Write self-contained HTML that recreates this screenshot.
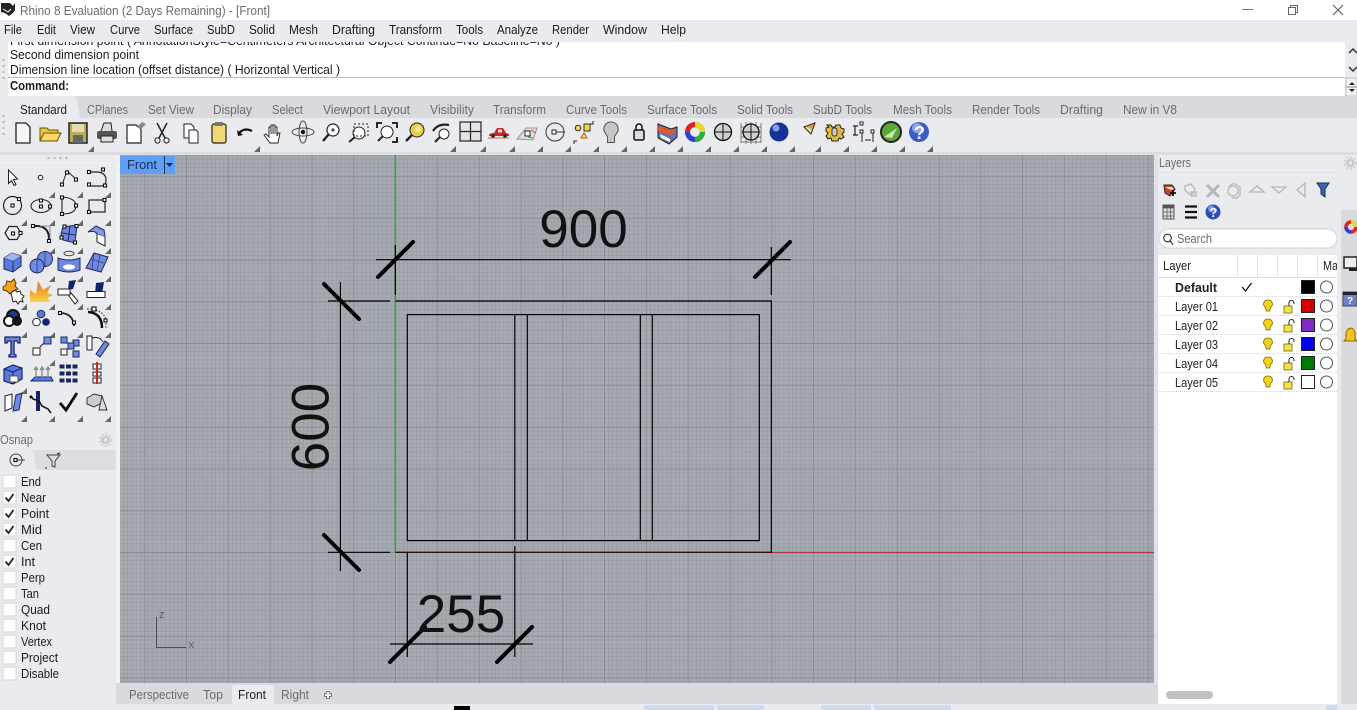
<!DOCTYPE html>
<html><head><meta charset="utf-8"><style>
html,body{margin:0;padding:0;background:#e9ebee;overflow:hidden}
svg{display:block}
text{font-family:"Liberation Sans",sans-serif;font-size:12.5px;fill:#1c1c1c}
.g{fill:#6b6b6b}.m{fill:#222}
.t{stroke:#000;stroke-width:4;stroke-linecap:round}
.l{stroke:#000;stroke-width:1.2;fill:none}
.o{stroke:#222;stroke-width:1.3;fill:none}
.h{fill:#fff;stroke:#111;stroke-width:1.1}
.b{fill:#6f86e0;stroke:#1c2a5c;stroke-width:1}
</style></head><body>
<svg xmlns="http://www.w3.org/2000/svg" width="1357" height="710" viewBox="0 0 1357 710">
<defs>
<linearGradient id="burst" x1="0" y1="0" x2="0" y2="1"><stop offset="0" stop-color="#e8700c"/><stop offset="1" stop-color="#fbd04c"/></linearGradient>
<pattern id="minor" x="395" y="552" width="4.18" height="4.18" patternUnits="userSpaceOnUse"><rect width="4.18" height="4.18" fill="#a5a9b0"/><path d="M0 0V4.18M0 0H4.18" stroke="#94989f" stroke-width="1"/></pattern>
<pattern id="major" x="395.5" y="552.5" width="41.8" height="41.8" patternUnits="userSpaceOnUse"><path d="M0 0V41.8M0 0H41.8" stroke="#7e8289" stroke-width="1" fill="none"/></pattern>
<path id="c" d="M0 0l-6 6h6z" fill="#666"/>
<g id="chk"><rect x="3" y="0" width="13" height="13" fill="#fff" stroke="#d5d6d9"/></g>
<path id="tick" d="M5.500 6.500l3 3.500 5-7" fill="none" stroke="#222" stroke-width="1.800"/>
<g id="bulb"><path d="M0-6a4 4 0 0 1 3 7l-1 2v2h-4v-2l-1-2a4 4 0 0 1 3-7z" fill="#f2d21c" stroke="#7a6a00" stroke-width=".8"/></g>
<g id="lk"><rect x="-5" y="-1" width="8" height="7" fill="#f5e050" stroke="#7a6a00" stroke-width=".8"/><path d="M0-1v-3a2.500 2.500 0 0 1 5 0v1" fill="none" stroke="#222" stroke-width="1"/></g>
</defs>

<!-- base -->
<rect width="1357" height="710" fill="#e9ebee"/>
<rect width="1357" height="20" fill="#fff"/>

<!-- title -->
<path d="M1 3h9l3 3 2-3v7l-2 3-4 3-4-3-4-1z" fill="#222"/><path d="M3 9l5 3 3-3" fill="none" stroke="#fff"/>
<text x="20" y="15" class="g" textLength="250" lengthAdjust="spacingAndGlyphs">Rhino 8 Evaluation (2 Days Remaining) - [Front]</text>
<path d="M1242 9.500h11" stroke="#777"/>
<path d="M1288.500 7.500h7v7h-7zM1290.500 7.500v-2h7v7h-2" fill="none" stroke="#666"/>
<path d="M1333 5l10 10M1343 5l-10 10" stroke="#555"/>

<!-- menu -->
<g class="m">
<text x="4" y="34" textLength="18" lengthAdjust="spacingAndGlyphs">File</text>
<text x="37" y="34" textLength="19" lengthAdjust="spacingAndGlyphs">Edit</text>
<text x="70" y="34" textLength="25" lengthAdjust="spacingAndGlyphs">View</text>
<text x="110" y="34" textLength="30" lengthAdjust="spacingAndGlyphs">Curve</text>
<text x="154" y="34" textLength="39" lengthAdjust="spacingAndGlyphs">Surface</text>
<text x="207" y="34" textLength="28" lengthAdjust="spacingAndGlyphs">SubD</text>
<text x="249" y="34" textLength="26" lengthAdjust="spacingAndGlyphs">Solid</text>
<text x="289" y="34" textLength="29" lengthAdjust="spacingAndGlyphs">Mesh</text>
<text x="332" y="34" textLength="43" lengthAdjust="spacingAndGlyphs">Drafting</text>
<text x="389" y="34" textLength="53" lengthAdjust="spacingAndGlyphs">Transform</text>
<text x="456" y="34" textLength="27" lengthAdjust="spacingAndGlyphs">Tools</text>
<text x="497" y="34" textLength="41" lengthAdjust="spacingAndGlyphs">Analyze</text>
<text x="552" y="34" textLength="37" lengthAdjust="spacingAndGlyphs">Render</text>
<text x="603" y="34" textLength="44" lengthAdjust="spacingAndGlyphs">Window</text>
<text x="661" y="34" textLength="25" lengthAdjust="spacingAndGlyphs">Help</text>
</g>

<!-- command area -->
<rect x="8" y="42" width="1337" height="54" fill="#fff"/>
<svg x="0" y="42" width="1345" height="6"><text x="10" y="3" textLength="550" lengthAdjust="spacingAndGlyphs">First dimension point ( AnnotationStyle=Centimeters Architectural  Object  Continue=No  Baseline=No )</text></svg>
<text x="10" y="59" textLength="129" lengthAdjust="spacingAndGlyphs">Second dimension point</text>
<text x="10" y="74" textLength="330" lengthAdjust="spacingAndGlyphs">Dimension line location (offset distance) ( Horizontal  Vertical )</text>
<path d="M8 77.500H1345" stroke="#b8bac0"/>
<text x="10" y="90" textLength="59" lengthAdjust="spacingAndGlyphs" style="font-weight:700">Command:</text>
<g fill="#b5b7bc"><circle cx="3.500" cy="60" r="1.200"/><circle cx="3.500" cy="66" r="1.200"/><circle cx="3.500" cy="72" r="1.200"/><circle cx="3.500" cy="78" r="1.200"/></g>
<path d="M1349 53l4-4 4 4M1349 67l4 4 4-4" fill="none" stroke="#444" stroke-width="1.600"/>
<path d="M1346 78h11v18h-11z" fill="#f4f4f5" stroke="#bbb"/><path d="M1346.500 87h10" stroke="#888"/><path d="M1349 85l3-3 3 3zM1349 89l3 3 3-3z" fill="#222"/>

<!-- toolbar tabs -->
<rect y="96" width="1357" height="22" fill="#d9dadd"/>
<path d="M0 118V98q0-2 2-2H72q4 0 5 4l3 18z" fill="#e9ebee"/>
<text x="20" y="114" class="m" textLength="47" lengthAdjust="spacingAndGlyphs">Standard</text>
<g class="g">
<text class="g" x="87" y="114" textLength="41" lengthAdjust="spacingAndGlyphs">CPlanes</text>
<text class="g" x="148" y="114" textLength="46" lengthAdjust="spacingAndGlyphs">Set View</text>
<text class="g" x="213" y="114" textLength="39" lengthAdjust="spacingAndGlyphs">Display</text>
<text class="g" x="272" y="114" textLength="31" lengthAdjust="spacingAndGlyphs">Select</text>
<text class="g" x="323" y="114" textLength="87" lengthAdjust="spacingAndGlyphs">Viewport Layout</text>
<text class="g" x="430" y="114" textLength="44" lengthAdjust="spacingAndGlyphs">Visibility</text>
<text class="g" x="493" y="114" textLength="53" lengthAdjust="spacingAndGlyphs">Transform</text>
<text class="g" x="566" y="114" textLength="61" lengthAdjust="spacingAndGlyphs">Curve Tools</text>
<text class="g" x="647" y="114" textLength="70" lengthAdjust="spacingAndGlyphs">Surface Tools</text>
<text class="g" x="737" y="114" textLength="56" lengthAdjust="spacingAndGlyphs">Solid Tools</text>
<text class="g" x="813" y="114" textLength="59" lengthAdjust="spacingAndGlyphs">SubD Tools</text>
<text class="g" x="893" y="114" textLength="59" lengthAdjust="spacingAndGlyphs">Mesh Tools</text>
<text class="g" x="972" y="114" textLength="68" lengthAdjust="spacingAndGlyphs">Render Tools</text>
<text class="g" x="1060" y="114" textLength="43" lengthAdjust="spacingAndGlyphs">Drafting</text>
<text class="g" x="1123" y="114" textLength="54" lengthAdjust="spacingAndGlyphs">New in V8</text>
</g>
<rect y="152" width="1357" height="3" fill="#dcdde0"/>
<g fill="#b5b7bc"><circle cx="3.500" cy="116" r="1.200"/><circle cx="3.500" cy="122" r="1.200"/><circle cx="3.500" cy="128" r="1.200"/><circle cx="3.500" cy="134" r="1.200"/></g>

<!-- toolbar icons -->
<g>
<path d="M16 123h10l4 4v16H16z" fill="#f6f6f6" stroke="#222" stroke-width="1.300"/>
<path d="M40 141v-13h7l2 2h9v3" fill="#e9c24a" stroke="#6a5200"/><path d="M40 141l4-8h17l-4 8z" fill="#f7d868" stroke="#6a5200"/>
<path d="M69 123h18v20H69z" fill="#b9ab5a" stroke="#222" stroke-width="1.500"/><rect x="72" y="124" width="12" height="8" fill="#e3dcae"/><rect x="73" y="135" width="10" height="8" fill="#666"/>
<use href="#c" x="94" y="146"/>
<path d="M101 131l3-8h7l1 8" fill="#ddd" stroke="#222"/><rect x="97" y="131" width="20" height="8" rx="2" fill="#555"/><rect x="101" y="136" width="12" height="6" fill="#ddd" stroke="#222"/>
<path d="M127 125h9l5 4v14h-14z" fill="#fff" stroke="#222" stroke-width="1.200"/><path d="M137 127l5-5 4 2-5 5z" fill="#888"/>
<path d="M157 123l8 15M167 123l-8 15" stroke="#222" stroke-width="1.500"/><circle cx="157.500" cy="140.500" r="2.600" fill="none" stroke="#222"/><circle cx="166.500" cy="140.500" r="2.600" fill="none" stroke="#222"/>
<path d="M184 124h7l3 3v11h-10z" fill="#fff" stroke="#222"/><path d="M189 130h7l2 2v11h-9z" fill="#fff" stroke="#222"/>
<rect x="212" y="124" width="14" height="19" rx="2" fill="#f2d873" stroke="#222" stroke-width="1.200"/><rect x="215" y="122" width="8" height="4" fill="#777"/>
<path d="M238 134q6-7 14-3" fill="none" stroke="#111" stroke-width="2.200"/><path d="M237 130l1 6 5-1z" fill="#111"/><use href="#c" x="260" y="146"/>
<path d="M270 143l-6-8 2-1 3 3v-10h2v7-9h2v9-9h2v9-7h2v9l1-3h2l-2 10z" fill="#fff" stroke="#222" stroke-width=".9"/>
<ellipse cx="303" cy="132" rx="11" ry="4" fill="none" stroke="#444"/><ellipse cx="303" cy="132" rx="4" ry="11" fill="none" stroke="#444"/><circle cx="303" cy="132" r="2.200" fill="#111"/>
<circle cx="333" cy="130" r="6" fill="#fff" stroke="#222" stroke-width="1.200"/><path d="M329 134l-6 7" stroke="#222" stroke-width="2.400"/><path d="M331 130h4M333 128v4" stroke="#222"/>
<circle cx="359" cy="133" r="6" fill="#fff" stroke="#222"/><path d="M355 137l-6 5" stroke="#222" stroke-width="2"/><rect x="354" y="124" width="14" height="12" fill="none" stroke="#222" stroke-dasharray="2 2"/>
<circle cx="387" cy="132" r="6" fill="#fff" stroke="#222"/><path d="M383 136l-5 5" stroke="#222" stroke-width="2"/><path d="M377 128v-5h5M392 123h5v5M397 137v5h-5" fill="none" stroke="#111" stroke-width="1.800"/>
<circle cx="417" cy="130" r="7" fill="#e6cf4e" stroke="#222"/><circle cx="418" cy="129" r="3" fill="#f7e88c"/><path d="M412 135l-6 6" stroke="#222" stroke-width="2.400"/>
<circle cx="444" cy="134" r="5" fill="#fff" stroke="#222"/><path d="M440 137l-5 5" stroke="#222" stroke-width="2"/><path d="M433 131q5-8 16-6" fill="none" stroke="#222" stroke-width="2.200"/><use href="#c" x="456" y="146"/>
<rect x="460" y="122" width="21" height="19" fill="#e4e4e4" stroke="#222" stroke-width="1.200"/><path d="M470.500 122v19M460 131.500h21" stroke="#222" stroke-width="1.200"/><use href="#c" x="486" y="146"/>
<path d="M489 135q1-2 5-2l3-5h6l3 5 3 1v2h-20z" fill="#c9282a"/><rect x="498" y="129.500" width="4" height="3" fill="#f3dede"/><circle cx="493" cy="136" r="1.800" fill="#222"/><circle cx="505" cy="136" r="1.800" fill="#222"/><path d="M488 138h21" stroke="#c66"/><use href="#c" x="515" y="146"/>
<path d="M517 139l9-11h11l-4 12z" fill="#ddd" stroke="#999"/><rect x="525" y="131" width="5" height="5" fill="#fff" stroke="#222"/><path d="M531 130l5 3" stroke="#d33"/><path d="M528 137l5 1" stroke="#3a3"/><use href="#c" x="543" y="146"/>
<circle cx="555" cy="132" r="9" fill="none" stroke="#333"/><path d="M553 132h12" stroke="#333"/><rect x="552" y="130" width="4" height="4" fill="#fff" stroke="#222"/><use href="#c" x="571" y="146"/>
<circle cx="578" cy="128" r="2.800" fill="#f0d83c" stroke="#333"/><rect x="584" y="124" width="6" height="7" fill="#f0d83c" stroke="#333"/><path d="M581 138l3-5 3 5z" fill="#f4e58c" stroke="#b35c00"/><path d="M574 144v-3h3M590 124h3v-3" fill="none" stroke="#222"/><use href="#c" x="599" y="146"/>
<path d="M611 122a7 7 0 0 1 5.500 11.500l-2 3v6h-7v-6l-2-3a7 7 0 0 1 5.500-11.500z" fill="#c6c6c6" stroke="#555"/><use href="#c" x="627" y="146"/>
<rect x="634" y="130" width="10" height="10" rx="1.500" fill="#ddd" stroke="#111" stroke-width="1.500"/><path d="M636 130v-3a3 3 0 0 1 6 0v3" fill="none" stroke="#111" stroke-width="1.500"/><use href="#c" x="655" y="146"/>
<path d="M658 124l13 5 6-2v10l-8 7-11-6z" fill="#6372b6" stroke="#222"/><path d="M658 126l13 4 5-2-1 4-5 3-12-4z" fill="#e2572c"/><path d="M660 134l10 5v3l-9-4z" fill="#fff"/><use href="#c" x="683" y="146"/>
<circle cx="695" cy="132" r="7.500" fill="none" stroke="#d22" stroke-width="5"/><path d="M695 124.500a7.500 7.500 0 0 1 7.500 7.500" fill="none" stroke="#e8d820" stroke-width="5"/><path d="M702.500 132a7.500 7.500 0 0 1-7.500 7.500" fill="none" stroke="#22b33a" stroke-width="5"/><path d="M695 139.500a7.500 7.500 0 0 1-7.500-7.500" fill="none" stroke="#2a40d8" stroke-width="5"/><use href="#c" x="711" y="146"/>
<circle cx="723" cy="132" r="8.500" fill="#cfcfcf" stroke="#111" stroke-width="1.300"/><path d="M715 132h16M723 124v16" stroke="#111"/><use href="#c" x="739" y="146"/>
<path d="M741 123v20M746 122v22M751 122v22M756 122v22M761 123v20M741 127h20M741 132h20M741 137h20M741 142h20" stroke="#555" stroke-width=".7"/><circle cx="751" cy="132" r="8" fill="#cfcfcf" stroke="#111" stroke-width="1.300"/><path d="M743 132h16M751 124v16" stroke="#111"/><use href="#c" x="767" y="146"/>
<circle cx="779" cy="132" r="9.500" fill="#14339a"/><circle cx="776" cy="128" r="3.500" fill="#7fa0ee"/><use href="#c" x="795" y="146"/>
<path d="M804 127l11-4-4 11z" fill="#e9d7a0" stroke="#222"/><path d="M807 127l7-3-2 5z" fill="#ef9b20"/><use href="#c" x="821" y="146"/>
<path d="M827 125h4l1 2h3l1-2h4l1 3 3 1v3l-2 2 2 3-3 2-2-1-1 3h-6l-1-3-3 1-2-3 2-3-2-2v-3l3-1z" fill="#e5ba3c" stroke="#222"/><rect x="832" y="128" width="5" height="8" rx="2" fill="#ccc" stroke="#333"/><use href="#c" x="849" y="146"/>
<path d="M853 126h5M855 126v9M853 135h5" stroke="#222" stroke-width="1.200" fill="none"/><rect x="860" y="122" width="3" height="3" fill="#fff" stroke="#222"/><rect x="860" y="130" width="3" height="3" fill="#fff" stroke="#222"/><path d="M862 133v9M865 140h6M873 133v9" stroke="#222"/><rect x="871" y="130" width="3" height="3" fill="#fff" stroke="#222"/><use href="#c" x="877" y="146"/>
<circle cx="891" cy="132" r="11" fill="#222"/><circle cx="891" cy="132" r="9" fill="#5aa83a"/><path d="M884 137l13-9-5 10z" fill="#c7e6a8"/><use href="#c" x="905" y="146"/>
<circle cx="919" cy="132" r="10" fill="#3a5bc8"/><circle cx="917" cy="128" r="5" fill="#8ea6ec"/><text x="914" y="139" style="font-size:18px;font-weight:700;fill:#fff">?</text><use href="#c" x="933" y="146"/>
</g>

<!-- left panel -->
<rect y="155" width="116" height="549" fill="#e9ebee"/>
<rect x="116" y="155" width="4" height="549" fill="#f1f2f4"/>
<g fill="#b5b7bc"><circle cx="48.500" cy="158" r="1.200"/><circle cx="54.500" cy="158" r="1.200"/><circle cx="60.500" cy="158" r="1.200"/><circle cx="66.500" cy="158" r="1.200"/></g>
<path d="M0 163H116" stroke="#f2f3f5"/>

<!-- Tool grid row 1 -->
<path d="M8.500 170l9 9-4 .5 2.500 5-2 1-2.500-5-3 3z" fill="#fff" stroke="#222"/>
<circle cx="40.500" cy="177.500" r="2.300" fill="#fff" stroke="#222"/><use href="#c" x="55" y="192"/>
<path d="M62 185l5-14 9 8" fill="none" stroke="#222"/><rect x="60.500" y="183" width="3" height="3" class="h"/><rect x="65.500" y="171" width="3" height="3" class="h"/><rect x="74.500" y="178" width="3" height="3" class="h"/><use href="#c" x="83" y="192"/>
<path d="M89 172h9q8 1 8 8t-8 6h-9" fill="none" stroke="#222" stroke-width="1.200"/><rect x="87.500" y="170.500" width="3" height="3" class="h"/><rect x="101.500" y="168" width="3" height="3" class="h"/><rect x="103.500" y="184" width="3" height="3" class="h"/><rect x="87.500" y="183" width="3" height="3" class="h"/><use href="#c" x="111" y="192"/>
<!-- row 2 -->
<circle cx="12.500" cy="205.500" r="9" fill="none" stroke="#222" stroke-width="1.200"/><rect x="11" y="204" width="3" height="3" class="h"/><rect x="17.500" y="197.500" width="3" height="3" class="h"/><use href="#c" x="27" y="220"/>
<ellipse cx="41" cy="206" rx="10" ry="6.500" fill="none" stroke="#222" stroke-width="1.100"/><rect x="39.500" y="199" width="3" height="3" class="h"/><rect x="39.500" y="205" width="3" height="3" class="h"/><rect x="48.500" y="205" width="3" height="3" class="h"/><use href="#c" x="55" y="220"/>
<path d="M62 197q14 1 14 9t-14 8z" fill="none" stroke="#222" stroke-width="1.100"/><rect x="60.500" y="196" width="3" height="3" class="h"/><rect x="74.500" y="204" width="3" height="3" class="h"/><rect x="60.500" y="212.500" width="3" height="3" class="h"/><use href="#c" x="83" y="220"/>
<rect x="89" y="200" width="16" height="12" fill="none" stroke="#222" stroke-width="1.200"/><rect x="103" y="198.500" width="3" height="3" class="h"/><rect x="87.500" y="210.500" width="3" height="3" class="h"/><use href="#c" x="111" y="220"/>
<!-- row 3 -->
<path d="M5 233l4-6.500h8l4 6.500-4 6.500H9z" fill="none" stroke="#222" stroke-width="1.200"/><rect x="11.500" y="232" width="3" height="3" class="h"/><rect x="19" y="231.500" width="3" height="3" class="h"/><use href="#c" x="27" y="248"/>
<path d="M33 226h5q11 1 11 13v4" fill="none" stroke="#222" stroke-width="2"/><path d="M40 226h10v14" fill="none" stroke="#888"/><rect x="31.500" y="224.500" width="3" height="3" class="h"/><rect x="47.500" y="239.500" width="3" height="3" class="h"/><use href="#c" x="55" y="248"/>
<path d="M63 227l14-2-2 18-12-3-2-6z" class="b"/><path d="M70 226l-2 15M62 233l14 2" stroke="#1c2a5c" fill="none"/><rect x="63" y="225" width="3" height="3" class="h"/><rect x="75" y="224.500" width="3" height="3" class="h"/><rect x="60" y="236" width="3" height="3" class="h"/><rect x="73.500" y="241" width="3" height="3" class="h"/><use href="#c" x="83" y="248"/>
<path d="M88 232l8-6 8 4q1 4 1 7l-8-3q-2-4-9-2z" fill="#8098e8" stroke="#1c2a5c"/><path d="M97 234v8l8 4v-9" fill="#fff" stroke="#222"/><use href="#c" x="111" y="248"/>
<!-- row 4 -->
<path d="M4 258l8-5 9 3v10l-8 6-9-3z" fill="#5a78de" stroke="#1c2a5c"/><path d="M4 258l9 3 8-5M13 261v11" fill="none" stroke="#1c2a5c"/><path d="M4 258l8-5 9 3-8 5z" fill="#a0b3f0"/><use href="#c" x="27" y="276"/>
<circle cx="45" cy="259" r="7.500" fill="#7089e2" stroke="#1c2a5c"/><circle cx="37" cy="266" r="7" fill="#7089e2" stroke="#1c2a5c"/><path d="M37 259v14M45 252v14" stroke="#1c2a5c" stroke-width=".6"/><use href="#c" x="55" y="276"/>
<ellipse cx="69" cy="253.500" rx="5" ry="2.200" fill="none" stroke="#444"/><path d="M58 258q11 4 22 0v12q-11 4-22 0z" fill="#6f86e0" stroke="#1c2a5c"/><ellipse cx="69" cy="267" rx="6" ry="2.600" fill="#fff"/><use href="#c" x="83" y="276"/>
<path d="M86 268l8-15 14 4-7 15z" fill="#7089e2" stroke="#1c2a5c"/><path d="M91 259l13 4M94 253l-2 16M100 255l-3 16" stroke="#1c2a5c" stroke-width=".6"/><use href="#c" x="111" y="276"/>
<!-- row 5 -->
<path d="M3 287l3-2 1-4 4 1 3-3 2 4-1 3 3 3-5 2-3 3-3-3-4-1z" fill="#f0a418" stroke="#5a3a00"/><path d="M11 293l4-3 2 2 3-1 1 3 3 2-2 3 1 3-3-1-2 3-2-3-3 1z" fill="#fff" stroke="#222"/><use href="#c" x="27" y="304"/>
<path d="M30 302V290l6 4 2-13 5 9 8-5-4 8 6 2-6 3 4 4z" fill="url(#burst)"/><use href="#c" x="55" y="304"/>
<path d="M69 281l7-1-3 9-5 1z" fill="#14246a"/><rect x="58" y="289" width="12" height="6" fill="#fff" stroke="#222"/><path d="M71 293l7 8-3 3-6-8z" fill="#fff" stroke="#222"/><use href="#c" x="83" y="304"/>
<path d="M96 283l8-1-2 12h-7z" fill="#14246a"/><rect x="87" y="291.500" width="18" height="6" fill="#fff" stroke="#222"/><use href="#c" x="111" y="304"/>
<!-- row 6 -->
<circle cx="13" cy="316" r="6" fill="#1c3a94" stroke="#111" stroke-width="2"/><circle cx="9" cy="321" r="5" fill="#fff" stroke="#111" stroke-width="2"/><circle cx="17" cy="321" r="5" fill="#111"/><use href="#c" x="27" y="332"/>
<circle cx="41" cy="314" r="3.800" fill="#5a78de" stroke="#1c2a5c"/><circle cx="36.500" cy="322" r="3.800" fill="#fff" stroke="#222"/><circle cx="46" cy="322" r="3.800" fill="#14246a"/><use href="#c" x="55" y="332"/>
<path d="M60 313q13 0 14 13" fill="none" stroke="#222" stroke-width="1.800"/><rect x="58.500" y="311.500" width="3" height="3" class="h"/><rect x="72.500" y="321" width="3" height="3" class="h"/><use href="#c" x="83" y="332"/>
<path d="M88 312q14 1 14 16" fill="none" stroke="#111" stroke-width="2.500"/><path d="M87 309q16 0 19 11v9" fill="none" stroke="#222" stroke-dasharray="1.500 1.500"/><rect x="92" y="307" width="4" height="4" class="h"/><rect x="104" y="319" width="3" height="3" class="h"/><use href="#c" x="111" y="332"/>
<!-- row 7 -->
<path d="M5 337h15v6h-2l-1-2h-3v13l2 1v2H9v-2l2-1v-13H8l-1 2H5z" fill="#6f86e0" stroke="#14246a" stroke-width="1.300"/>
<rect x="33" y="348" width="7" height="7" fill="#fff" stroke="#222"/><rect x="44" y="337" width="7" height="7" fill="#7089e2" stroke="#1c2a5c"/><path d="M40 347l4-4" stroke="#222"/><use href="#c" x="55" y="360"/>
<rect x="61" y="337" width="6" height="6" fill="#7089e2" stroke="#1c2a5c"/><rect x="73" y="340" width="6" height="6" fill="#7089e2" stroke="#1c2a5c"/><rect x="61" y="349" width="6" height="6" fill="#fff" stroke="#222"/><rect x="73" y="351" width="6" height="6" fill="#7089e2" stroke="#1c2a5c"/><rect x="68" y="343" width="6" height="6" fill="#7089e2" stroke="#1c2a5c"/>
<rect x="87" y="336" width="5" height="14" fill="#fff" stroke="#222"/><path d="M96 354l9-13 4 3-9 13z" fill="#7089e2" stroke="#1c2a5c"/><path d="M92 338q8-2 11 4" fill="none" stroke="#222"/>
<!-- row 8 -->
<path d="M4 369l9-4 9 3v11l-9 5-9-3z" fill="#5a78de" stroke="#14246a" stroke-width="1.200"/><path d="M4 369l9 3 9-4M13 372v12" fill="none" stroke="#14246a"/><rect x="10" y="376" width="8" height="6" fill="#fff" stroke="#555"/><use href="#c" x="27" y="388"/>
<path d="M31 381l4-4h16l2 4z" fill="#5a78de" stroke="#1c2a5c"/><path d="M36 378v-10M42 378v-10M48 378v-10M34 370l2-3 2 3M40 370l2-3 2 3M46 370l2-3 2 3" fill="none" stroke="#888" stroke-width="1.300"/>
<g fill="#14246a" stroke="#1c2a5c"><rect x="60" y="365" width="4" height="3"/><rect x="66.500" y="365" width="4" height="3"/><rect x="73" y="365" width="4" height="3"/><rect x="60" y="372" width="4" height="3"/><rect x="66.500" y="372" width="4" height="3"/><rect x="73" y="372" width="4" height="3"/><rect x="60" y="379" width="4" height="3"/><rect x="66.500" y="379" width="4" height="3"/><rect x="73" y="379" width="4" height="3"/></g>
<rect x="93" y="364" width="8" height="5" fill="#fff" stroke="#222"/><rect x="93" y="372" width="8" height="4" fill="#fff" stroke="#222"/><rect x="93" y="378" width="8" height="5" fill="#fff" stroke="#222"/><path d="M97 362v22" stroke="#c22" stroke-width="2"/>
<!-- row 9 -->
<path d="M5 396l7-2v14l-7 3z" fill="#fff" stroke="#222"/><path d="M13 411l3-16 6-2-3 17z" fill="#7089e2" stroke="#1c2a5c"/><use href="#c" x="27" y="416"/>
<path d="M38 391v20" stroke="#14246a" stroke-width="4"/><path d="M31 396l2 3 6 2 3 5 6 3 3 4" fill="none" stroke="#111" stroke-width="1.500"/><circle cx="31" cy="397" r="1.500"/><use href="#c" x="55" y="416"/>
<path d="M60 403l6 7 11-17" fill="none" stroke="#0a0a0a" stroke-width="2.800"/><use href="#c" x="83" y="416"/>
<path d="M87 398l7-4 8 2v7l-8 4-7-3z" fill="#ccc" stroke="#333"/><path d="M102 396l5 14-8 0z" fill="#ddd" stroke="#333"/><use href="#c" x="111" y="416"/>

<!-- Osnap -->
<text x="0" y="444" class="g" textLength="33" lengthAdjust="spacingAndGlyphs">Osnap</text>
<circle cx="105.500" cy="440" r="4.500" fill="#c8cacd"/><circle cx="105.500" cy="440" r="1.600" fill="#e9ebee"/><circle cx="105.500" cy="440" r="6" fill="none" stroke="#c8cacd" stroke-width="1.600" stroke-dasharray="2 2"/>
<rect y="450" width="116" height="20" fill="#dcdde0"/>
<path d="M0 470v-20h30q3 0 4 3l2 17z" fill="#e9ebee"/>
<circle cx="16" cy="460" r="6" fill="none" stroke="#444"/><path d="M14 460h11" stroke="#444"/><rect x="14" y="458.500" width="3" height="3" class="h"/>
<path d="M47 455h13l-5 6v6l-3-1v-5z" fill="#d8dadd" stroke="#444"/><path d="M46 469v-2M57 454l3-1" stroke="#222"/>
<g>
<use href="#chk" y="475"/><use href="#chk" y="491"/><use href="#chk" y="507"/><use href="#chk" y="523"/><use href="#chk" y="539"/><use href="#chk" y="555"/><use href="#chk" y="571"/><use href="#chk" y="587"/><use href="#chk" y="603"/><use href="#chk" y="619"/><use href="#chk" y="635"/><use href="#chk" y="651"/><use href="#chk" y="667"/>
<use href="#tick" y="491"/><use href="#tick" y="507"/><use href="#tick" y="523"/><use href="#tick" y="555"/>
</g>
<g class="m">
<text x="21" y="486" textLength="20" lengthAdjust="spacingAndGlyphs">End</text>
<text x="21" y="502" textLength="25" lengthAdjust="spacingAndGlyphs">Near</text>
<text x="21" y="518" textLength="28" lengthAdjust="spacingAndGlyphs">Point</text>
<text x="21" y="534" textLength="21" lengthAdjust="spacingAndGlyphs">Mid</text>
<text x="21" y="550" textLength="21" lengthAdjust="spacingAndGlyphs">Cen</text>
<text x="21" y="566" textLength="14" lengthAdjust="spacingAndGlyphs">Int</text>
<text x="21" y="582" textLength="24" lengthAdjust="spacingAndGlyphs">Perp</text>
<text x="21" y="598" textLength="18" lengthAdjust="spacingAndGlyphs">Tan</text>
<text x="21" y="614" textLength="29" lengthAdjust="spacingAndGlyphs">Quad</text>
<text x="21" y="630" textLength="25" lengthAdjust="spacingAndGlyphs">Knot</text>
<text x="21" y="646" textLength="31" lengthAdjust="spacingAndGlyphs">Vertex</text>
<text x="21" y="662" textLength="37" lengthAdjust="spacingAndGlyphs">Project</text>
<text x="21" y="678" textLength="38" lengthAdjust="spacingAndGlyphs">Disable</text>
</g>

<!-- Viewport -->
<rect x="120" y="155" width="1034" height="528" fill="url(#minor)"/>
<rect x="120" y="155" width="1034" height="528" fill="url(#major)"/>
<rect x="1154" y="155" width="4" height="528" fill="#dfe2e8"/>
<path d="M395.300 155V552" stroke="#3f9f3f" stroke-width="1.600"/>
<path d="M771 552.500H1154" stroke="#a53a3a" stroke-width="1.300"/>

<!-- drawing -->
<g class="l">
<path d="M395.300 301H771.300V552.300H395.300"/>
<path d="M395.300 552.300H771" stroke="#3a0c0c"/>
<rect x="407.300" y="314.600" width="352" height="226"/>
<path d="M514.800 314.600V540.600M527.300 314.600V540.600M640.300 314.600V540.600M652.300 314.600V540.600"/>
<path d="M376 259.700H791M395.300 245V295M771.300 247V295"/>
<path d="M340.400 282V571M328 301H390M328 552.300H390"/>
<path d="M390 644H533M407.300 552V657M514.800 546V657"/>
</g>
<g class="t">
<path d="M378 277L413 242M755 277L790 242"/>
<path d="M324 284L359 319M324 535L359 570"/>
<path d="M390 662L425 627M497 662L532 627"/>
</g>
<text x="583.500" y="247" text-anchor="middle" style="font-size:53px;fill:#111">900</text>
<text transform="translate(328.500,427) rotate(-90)" x="0" y="0" text-anchor="middle" style="font-size:53px;fill:#111">600</text>
<text x="461" y="632" text-anchor="middle" style="font-size:53px;fill:#111">255</text>

<!-- CPlane axes -->
<path d="M156.500 617V647.500H186" fill="none" stroke="#4a4f55"/>
<text x="159" y="618" style="font-size:11px;fill:#5c6066">z</text>
<text x="188.500" y="648" style="font-size:11px;fill:#5c6066">x</text>

<!-- Front tag -->
<rect x="120" y="156" width="55" height="18" rx="1" fill="#5f9ff5"/>
<text x="127" y="169" style="fill:#1b2f57" textLength="30" lengthAdjust="spacingAndGlyphs">Front</text>
<path d="M164.500 156V174" stroke="#1b2f57"/>
<path d="M166 163h7l-3.500 4z" fill="#1b2f57"/>

<!-- viewport tabs -->
<rect x="116" y="683" width="1042" height="21" fill="#d9dadd"/>
<text x="129" y="699" class="g" textLength="60" lengthAdjust="spacingAndGlyphs">Perspective</text>
<text x="203" y="699" class="g" textLength="20" lengthAdjust="spacingAndGlyphs">Top</text>
<path d="M232 704V688q0-3 3-3h36q3 0 3 3v16z" fill="#e9ebee"/>
<text x="238" y="699" class="m" textLength="28" lengthAdjust="spacingAndGlyphs">Front</text>
<text x="281" y="699" class="g" textLength="28" lengthAdjust="spacingAndGlyphs">Right</text>
<path d="M326.500 691.500h3v2h2v3h-2v2h-3v-2h-2v-3h2z" fill="#fff" stroke="#777"/>

<!-- status bits -->
<rect x="454" y="706" width="16" height="4" fill="#000"/>
<rect x="644" y="705" width="70" height="5" rx="1" fill="#d0d9ec"/>
<rect x="717" y="705" width="47" height="5" rx="1" fill="#d0d9ec"/>
<rect x="821" y="705" width="50" height="5" rx="1" fill="#d0d9ec"/>
<rect x="874" y="705" width="77" height="5" rx="1" fill="#d0d9ec"/>
<rect x="1326" y="705" width="13" height="5" rx="1" fill="#d0d9ec"/>
<rect x="1342" y="707" width="15" height="3" fill="#555"/>

<!-- Layers panel -->
<rect x="1158" y="155" width="179" height="549" fill="#e9ebee"/>
<text x="1159" y="167" class="g" textLength="32" lengthAdjust="spacingAndGlyphs">Layers</text>
<circle cx="1350.500" cy="163" r="4.500" fill="#c8cacd"/><circle cx="1350.500" cy="163" r="1.600" fill="#e9ebee"/><circle cx="1350.500" cy="163" r="6" fill="none" stroke="#c8cacd" stroke-width="1.600" stroke-dasharray="2 2"/>
<path d="M1158 172.500H1344" stroke="#dfe0e3"/>
<!-- layer toolbar -->
<path d="M1164 185h8l3 4-5 7-5-3z" fill="#c8452a" stroke="#222"/><path d="M1165 187h7l2 2-3 1z" fill="#f5e1c8"/><path d="M1170 193h6M1173 190v6" stroke="#111" stroke-width="1.800"/>
<g fill="none" stroke="#b4b6ba" stroke-width="1.300">
<path d="M1185 186l6-2 4 5-2 5h-4l-4-4zM1191 192h5v4h-5z"/>
<path d="M1207 185l12 12M1219 185l-12 12" stroke-width="3"/>
<circle cx="1233" cy="191" r="5"/><path d="M1229 188a5 5 0 0 1 6-4l5 3v8l-3 3h-5"/>
<path d="M1250 192l7-6 7 6z"/>
<path d="M1272 187h14l-7 6z"/>
<path d="M1305 183v14l-8-7z"/>
</g>
<path d="M1317 183h12l-4 6v8l-4-3v-5z" fill="#3d66b3" stroke="#1c2a5c"/>
<path d="M1345 188l11-2v7l-5 4-6-3z" fill="#c8452a" stroke="#222"/><path d="M1346 189l9-1-1 3-6 1z" fill="#f5e1c8"/>
<rect x="1163" y="205" width="11" height="14" fill="#ddd" stroke="#555"/><path d="M1163 208h11M1163 212h11M1163 216h11M1167 205v14M1170.500 205v14" stroke="#555" stroke-width=".7"/><rect x="1163" y="205" width="11" height="3" fill="#555"/>
<path d="M1185 206.500h12M1185 212h12M1185 217.500h12" stroke="#111" stroke-width="2.200"/>
<circle cx="1213" cy="212" r="7.500" fill="#2c4cb6"/><circle cx="1211.500" cy="209" r="3.500" fill="#7c96e8"/><text x="1209.500" y="217" style="font-size:13px;font-weight:700;fill:#fff">?</text>
<!-- Search -->
<rect x="1159" y="229" width="178" height="19" rx="9.500" fill="#fff" stroke="#d0d2d6"/>
<circle cx="1167.500" cy="238" r="3.800" fill="none" stroke="#333" stroke-width="1.100"/><path d="M1170 241l3 3.500" stroke="#333" stroke-width="1.200"/>
<text x="1177" y="243" class="g" textLength="35" lengthAdjust="spacingAndGlyphs">Search</text>
<!-- table -->
<rect x="1158" y="255" width="179" height="449" fill="#fff"/>
<path d="M1158 277.500H1337" stroke="#dcdde0"/>
<path d="M1237.500 255V277M1257.500 255V277M1277.500 255V277M1297.500 255V277M1317.500 255V277" stroke="#e1e2e5"/>
<text x="1163" y="270" class="m" textLength="28" lengthAdjust="spacingAndGlyphs">Layer</text>
<svg x="1320" y="255" width="17" height="22"><text x="3" y="15" class="m" textLength="18" lengthAdjust="spacingAndGlyphs">Mat</text></svg>
<g stroke="#d4d5d8" stroke-dasharray="1 1">
<path d="M1158 296.500H1337M1158 315.500H1337M1158 334.500H1337M1158 353.500H1337M1158 372.500H1337M1158 391.500H1337"/>
</g>
<text x="1175" y="292" class="m" style="font-weight:700" textLength="42" lengthAdjust="spacingAndGlyphs">Default</text>
<text x="1175" y="311" class="m" textLength="43" lengthAdjust="spacingAndGlyphs">Layer 01</text>
<text x="1175" y="330" class="m" textLength="43" lengthAdjust="spacingAndGlyphs">Layer 02</text>
<text x="1175" y="349" class="m" textLength="43" lengthAdjust="spacingAndGlyphs">Layer 03</text>
<text x="1175" y="368" class="m" textLength="43" lengthAdjust="spacingAndGlyphs">Layer 04</text>
<text x="1175" y="387" class="m" textLength="43" lengthAdjust="spacingAndGlyphs">Layer 05</text>
<path d="M1242 287l3.500 4 6-8" fill="none" stroke="#111" stroke-width="1.300"/>
<use href="#bulb" x="1268" y="306"/><use href="#bulb" x="1268" y="325"/><use href="#bulb" x="1268" y="344"/><use href="#bulb" x="1268" y="363"/><use href="#bulb" x="1268" y="382"/>
<use href="#lk" x="1289" y="307"/><use href="#lk" x="1289" y="326"/><use href="#lk" x="1289" y="345"/><use href="#lk" x="1289" y="364"/><use href="#lk" x="1289" y="383"/>
<g stroke="#222" stroke-width="1">
<rect x="1301.500" y="280.500" width="13" height="13" fill="#000"/>
<rect x="1301.500" y="299.500" width="13" height="13" fill="#d40000"/>
<rect x="1301.500" y="318.500" width="13" height="13" fill="#7f2bc8"/>
<rect x="1301.500" y="337.500" width="13" height="13" fill="#0000ee"/>
<rect x="1301.500" y="356.500" width="13" height="13" fill="#007a00"/>
<rect x="1301.500" y="375.500" width="13" height="13" fill="#fff"/>
</g>
<g fill="#fff" stroke="#555"><circle cx="1326.500" cy="287" r="6"/><circle cx="1326.500" cy="306" r="6"/><circle cx="1326.500" cy="325" r="6"/><circle cx="1326.500" cy="344" r="6"/><circle cx="1326.500" cy="363" r="6"/><circle cx="1326.500" cy="382" r="6"/></g>
<rect x="1166" y="691" width="47" height="8" rx="4" fill="#c0c1c4"/>

<!-- right tab strip -->
<rect x="1337" y="172" width="20" height="538" fill="#e9ebee"/>
<rect x="1341" y="210" width="16" height="494" fill="#d9dadd"/>
<circle cx="1351" cy="227" r="5" fill="none" stroke="#d22" stroke-width="3.500"/><path d="M1351 222a5 5 0 0 1 5 5" fill="none" stroke="#e8d820" stroke-width="3.500"/><path d="M1351 232a5 5 0 0 1-5-5" fill="none" stroke="#2a40d8" stroke-width="3.500"/>
<rect x="1344" y="257" width="13" height="11" fill="#eee" stroke="#222" stroke-width="1.500"/><rect x="1349" y="268" width="8" height="3" fill="#222"/>
<rect x="1343" y="292" width="14" height="14" fill="#6e80c8" stroke="#445"/><rect x="1343" y="292" width="14" height="3" fill="#223"/><text x="1347" y="304" style="font-size:10px;font-weight:700;fill:#fff">?</text>
<path d="M1351 328q4 1 4 6v5l2 2h-13l2-2v-5q0-5 5-6z" fill="#f3c31a" stroke="#8a6a00"/>
</svg>
</body></html>
